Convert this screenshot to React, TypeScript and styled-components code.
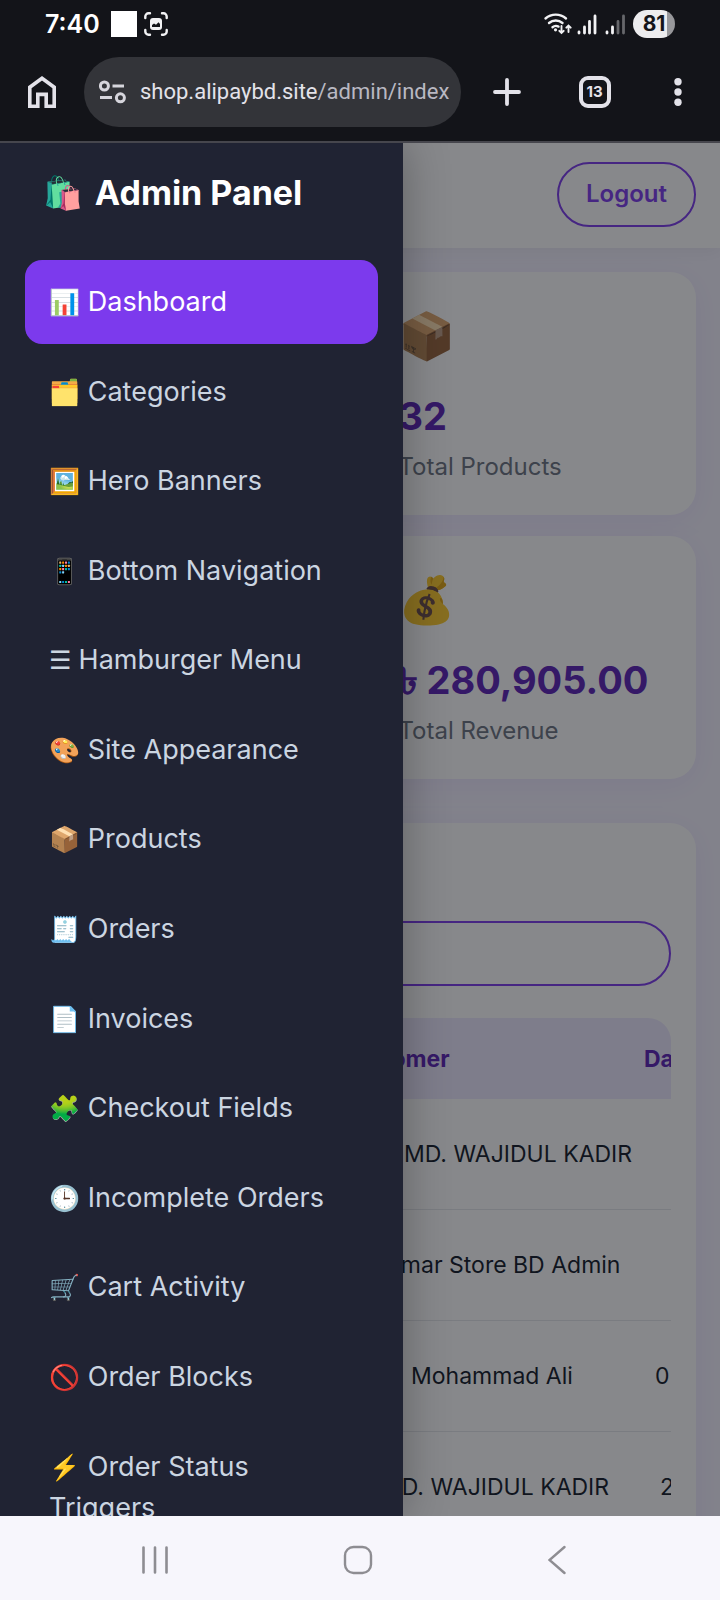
import React, { useState } from "react";
import styled, { createGlobalStyle } from "styled-components";

const menuItems = [
  { icon: "📊", label: "Dashboard" },
  { icon: "🗂️", label: "Categories" },
  { icon: "🖼️", label: "Hero Banners" },
  { icon: "📱", label: "Bottom Navigation" },
  { icon: "☰", label: "Hamburger Menu" },
  { icon: "🎨", label: "Site Appearance" },
  { icon: "📦", label: "Products" },
  { icon: "🧾", label: "Orders" },
  { icon: "📄", label: "Invoices" },
  { icon: "🧩", label: "Checkout Fields" },
  { icon: "🕒", label: "Incomplete Orders" },
  { icon: "🛒", label: "Cart Activity" },
  { icon: "🚫", label: "Order Blocks" },
  { icon: "⚡", label: "Order Status Triggers" },
];

const stats = [
  { icon: "📦", value: "32", label: "Total Products" },
  { icon: "💰", value: "৳ 280,905.00", label: "Total Revenue" },
];

const orders = [
  { customer: "MD. WAJIDUL KADIR", date: "", lead: 355, width: 280 },
  { customer: "Amar Store BD Admin", date: "", lead: 336, width: 300 },
  { customer: "Mohammad Ali", date: "0", lead: 362, width: 244 },
  { customer: "MD. WAJIDUL KADIR", date: "2", lead: 332, width: 279 },
];

export default function App() {
  const [active, setActive] = useState("Dashboard");
  const [search, setSearch] = useState("");

  return (
    <Screen>
      <GlobalStyle />
      <StatusBar>
        <Clock>7:40</Clock>
        <WhiteSquare />
        <CaptureIcon />
        <Spacer />
        <SignalIcons />
        <Battery>81</Battery>
      </StatusBar>
      <BrowserBar>
        <IconButton aria-label="Home">
          <svg width="28" height="32" viewBox="0 0 28 32" fill="none" stroke="#e3e2e9" strokeWidth="3.6">
            <path d="M1.8 30.2V11.2L14 2.3l12.2 8.9v19h-8V18.4H9.8v11.8z" />
          </svg>
        </IconButton>
        <AddressBar>
          <svg width="27" height="24" viewBox="0 0 27 24" fill="none" stroke="#d6d5dc" strokeWidth="3">
            <circle cx="5.4" cy="6" r="4" />
            <path d="M13.5 6H25M1 17.5h12" />
            <circle cx="21.4" cy="17.8" r="4" />
          </svg>
          <Url>
            shop.alipaybd.site<span>/admin/index</span>
          </Url>
        </AddressBar>
        <Actions>
          <IconButton aria-label="New tab">
            <svg width="28" height="28" viewBox="0 0 28 28" stroke="#e3e2e9" strokeWidth="3.8" strokeLinecap="round">
              <path d="M14 2v24M2 14h24" />
            </svg>
          </IconButton>
          <TabsButton aria-label="Open tabs">13</TabsButton>
          <IconButton aria-label="More">
            <svg width="20" height="28" viewBox="0 0 20 28" fill="#e3e2e9">
              <circle cx="10" cy="3.7" r="3.7" />
              <circle cx="10" cy="14" r="3.7" />
              <circle cx="10" cy="24.3" r="3.7" />
            </svg>
          </IconButton>
        </Actions>
      </BrowserBar>

      <Page>
        <Header>
          <LogoutButton type="button">Logout</LogoutButton>
        </Header>
        <Main>
          <Stats>
            {stats.map((stat) => (
              <StatCard key={stat.label}>
                <StatIcon>{stat.icon}</StatIcon>
                <StatValue>{stat.value}</StatValue>
                <StatLabel>{stat.label}</StatLabel>
              </StatCard>
            ))}
          </Stats>
          <Panel>
            <SearchInput aria-label="Search orders" value={search} onChange={(e) => setSearch(e.target.value)} />
            <TableWrapper>
              <Table>
                <thead>
                  <HeadRow $lead={290} $width={305}>
                    <th />
                    <th>Customer</th>
                    <th>Date</th>
                  </HeadRow>
                </thead>
                <tbody>
                  {orders.map((order, index) => (
                    <Row key={index} $lead={order.lead} $width={order.width}>
                      <td />
                      <td>{order.customer}</td>
                      <td>{order.date}</td>
                    </Row>
                  ))}
                </tbody>
              </Table>
            </TableWrapper>
          </Panel>
        </Main>
        <Backdrop />
        <Sidebar>
          <Brand>
            <span>🛍️</span>
            <BrandName>Admin Panel</BrandName>
          </Brand>
          <Menu>
            {menuItems.map(({ icon, label }) => (
              <MenuLink key={label} href="#" $active={label === active} onClick={() => setActive(label)}>
                <MenuIcon>{icon}</MenuIcon> {label}
              </MenuLink>
            ))}
          </Menu>
        </Sidebar>
      </Page>

      <NavBar>
        <IconButton aria-label="Recent apps">
          <svg width="26" height="28" viewBox="0 0 26 28" stroke="#8e8d92" strokeWidth="2.6" strokeLinecap="round">
            <path d="M1.5 1.5v25M13 1.5v25M24.5 1.5v25" />
          </svg>
        </IconButton>
        <IconButton aria-label="Home screen">
          <svg width="30" height="30" viewBox="0 0 30 30" fill="none" stroke="#8e8d92" strokeWidth="2.4">
            <rect x="2" y="2" width="26" height="26" rx="8.5" />
          </svg>
        </IconButton>
        <IconButton aria-label="Back">
          <svg width="18" height="30" viewBox="0 0 18 30" fill="none" stroke="#8e8d92" strokeWidth="2.4" strokeLinecap="round">
            <path d="M16.500 2L1.500 15l15 13" />
          </svg>
        </IconButton>
      </NavBar>
    </Screen>
  );
}

function CaptureIcon() {
  return (
    <svg width="24" height="24" viewBox="0 0 24 24" fill="none" stroke="#f2f2f4" strokeWidth="2.4" strokeLinecap="round">
      <path d="M1.3 6V4.5a3.2 3.2 0 0 1 3.2-3.2H6M18 1.3h1.5a3.2 3.2 0 0 1 3.2 3.2V6M22.7 18v1.5a3.2 3.2 0 0 1-3.2 3.2H18M6 22.7H4.5a3.2 3.2 0 0 1-3.2-3.2V18" />
      <rect x="6" y="6" width="12" height="12" rx="3" fill="#f2f2f4" stroke="none" />
      <path d="M8 15v-2l2-1.5 2 1.2 2.5-2.4L16 12v3z" fill="#131419" stroke="none" />
    </svg>
  );
}

function SignalIcons() {
  return (
    <svg width="84" height="24" viewBox="0 0 84 24" fill="none" stroke="#f2f2f4" strokeWidth="2.4" strokeLinecap="round">
      <path d="M2.5 6.5a15.5 15.5 0 0 1 20.5 0M6 11a10.5 10.5 0 0 1 13.5 0M9.5 15.2a5.5 5.5 0 0 1 6-.6" />
      <circle cx="12.5" cy="17.8" r="1.6" fill="#f2f2f4" stroke="none" />
      <path d="M18.5 14v6.5M16.3 18.800l2.200 2.200 2.200-2.200M25.500 20v-6M23.300 15.700l2.200-2.200 2.200 2.200" strokeWidth="1.9" />
      <path d="M36 21v-1M41.5 21v-6M46.5 21V9.5M52 21V4M64 21v-1M69.5 21v-6" strokeWidth="2.8" />
      <path d="M75 21V9.5M80.500 21V4" strokeWidth="2.8" stroke="#66676b" />
    </svg>
  );
}

const GlobalStyle = createGlobalStyle`
  * {
    box-sizing: border-box;
  }
  body {
    margin: 0;
    font-family: "Inter", "Noto Color Emoji", "Open Sans", sans-serif;
  }
  button, input {
    font-family: inherit;
  }
`;

const Screen = styled.div`
  height: 100vh;
  display: flex;
  flex-direction: column;
  background-color: #131419;
`;

const StatusBar = styled.div`
  display: flex;
  align-items: center;
  height: 48px;
  padding: 0 45px;
  flex-shrink: 0;
`;

const Clock = styled.div`
  color: #fff;
  font-size: 25px;
  font-weight: 600;
  margin-right: 11px;
`;

const WhiteSquare = styled.div`
  width: 26px;
  height: 26px;
  background-color: #fff;
  margin-right: 7px;
`;

const Spacer = styled.div`
  flex: 1;
`;

const Battery = styled.div`
  width: 42px;
  height: 28px;
  margin-left: 6px;
  border-radius: 14px;
  background: linear-gradient(to right, #ececee 81%, #97979a 81%);
  color: #131419;
  font-size: 21px;
  font-weight: 700;
  line-height: 28px;
  text-align: center;
`;

const BrowserBar = styled.div`
  display: flex;
  align-items: center;
  height: 95px;
  padding: 0 32px 6px 28px;
  border-bottom: 2px solid #46464d;
  flex-shrink: 0;
`;

const IconButton = styled.button`
  display: flex;
  padding: 0;
  border: none;
  background: none;
  cursor: pointer;
`;

const AddressBar = styled.div`
  flex: 1;
  min-width: 0;
  display: flex;
  align-items: center;
  gap: 14px;
  height: 70px;
  margin-left: 28px;
  padding: 0 15px;
  border-radius: 35px;
  background-color: #333439;
  svg {
    flex-shrink: 0;
  }
`;

const Url = styled.div`
  font-family: "Roboto", sans-serif;
  font-size: 22px;
  color: #e3e2e9;
  white-space: nowrap;
  span {
    color: #b9b8c2;
  }
`;

const Actions = styled.div`
  display: flex;
  align-items: center;
  justify-content: space-between;
  width: 195px;
  margin-left: 32px;
`;

const TabsButton = styled.button`
  width: 32px;
  height: 32px;
  padding: 0;
  border: 4px solid #e3e2e9;
  border-radius: 9px;
  background: none;
  color: #e3e2e9;
  font-size: 15px;
  font-weight: 700;
`;

const Page = styled.div`
  flex: 1;
  min-height: 0;
  position: relative;
  overflow: hidden;
  background-color: #f5f3ff;
`;

const Header = styled.header`
  display: flex;
  justify-content: flex-end;
  align-items: center;
  height: 105px;
  padding: 0 24px 2px;
  background-color: #fff;
  box-shadow: 0 3px 17px rgba(0, 0, 0, 0.06);
`;

const LogoutButton = styled.button`
  height: 65px;
  padding: 0 27px 2px;
  border: 2px solid #7c3aed;
  border-radius: 33px;
  background: none;
  color: #7c3aed;
  font-size: 24px;
  font-weight: 600;
`;

const Main = styled.main`
  padding: 24px;
`;

const Stats = styled.div`
  display: grid;
  grid-template-columns: 1fr 1fr;
  gap: 21px;
`;

const StatCard = styled.div`
  grid-column: 2;
  height: 243px;
  padding: 28px;
  border-radius: 26px;
  background-color: #fff;
  box-shadow: 0 6px 29px rgba(124, 58, 237, 0.08);
  white-space: nowrap;
`;

const StatIcon = styled.div`
  font-size: 46px;
  line-height: 70px;
`;

const StatValue = styled.div`
  color: #5b21b6;
  font-size: 38px;
  font-weight: 700;
  line-height: 64px;
  margin-top: 14px;
`;

const StatLabel = styled.div`
  color: #6b7280;
  font-size: 24px;
  line-height: 38px;
`;

const Panel = styled.section`
  margin-top: 44px;
  padding: 98px 25px 25px;
  border-radius: 26px;
  background-color: #fff;
  box-shadow: 0 6px 29px rgba(124, 58, 237, 0.08);
`;

const SearchInput = styled.input`
  display: block;
  width: 100%;
  height: 65px;
  padding: 0 28px;
  border: 2px solid #7c3aed;
  border-radius: 33px;
  background: none;
  font-size: 23px;
  outline: none;
`;

const TableWrapper = styled.div`
  margin-top: 32px;
  border-radius: 23px;
  overflow: hidden;
`;

const Table = styled.table`
  display: block;
  color: #111827;
  font-size: 23px;
  white-space: nowrap;
  thead,
  tbody {
    display: block;
  }
  th,
  td {
    padding: 0;
    text-align: left;
  }
`;

const Row = styled.tr<{ $lead: number; $width: number }>`
  display: grid;
  grid-template-columns: ${(props) => props.$lead}px ${(props) => props.$width}px auto;
  align-items: center;
  height: 111px;
  border-bottom: 1px solid #e5e7eb;
`;

const HeadRow = styled(Row)`
  height: 81px;
  border-bottom: none;
  background-color: #ede9fe;
  color: #5b21b6;
`;

const Backdrop = styled.div`
  position: absolute;
  inset: 0;
  background-color: rgba(15, 17, 23, 0.5);
`;

const Sidebar = styled.aside`
  position: absolute;
  top: 0;
  bottom: 0;
  left: 0;
  width: 56%;
  overflow: hidden;
  padding: 25px;
  background-color: #202333;
  box-shadow: 0 0 43px rgba(0, 0, 0, 0.3);
`;

const Brand = styled.div`
  display: flex;
  align-items: center;
  gap: 12px;
  height: 48px;
  padding: 0 18px;
  margin-bottom: 44px;
  color: #fff;
  font-size: 32px;
`;

const BrandName = styled.span`
  font-size: 34px;
  font-weight: 700;
`;

const Menu = styled.nav`
  display: flex;
  flex-direction: column;
  gap: 6px;
`;

const MenuLink = styled.a<{ $active: boolean }>`
  padding: 21px 24px;
  border-radius: 17px;
  background-color: ${(props) => (props.$active ? "#7c3aed" : "transparent")};
  color: ${(props) => (props.$active ? "#fff" : "#cbd5e1")};
  font-size: 27px;
  line-height: 1.54;
  text-decoration: none;
`;

const MenuIcon = styled.span`
  font-size: 25px;
  line-height: 1;
`;

const NavBar = styled.div`
  display: flex;
  align-items: center;
  justify-content: space-between;
  height: 84px;
  padding: 4px 154px 0 142px;
  background-color: #f7f6fc;
  flex-shrink: 0;
`;
